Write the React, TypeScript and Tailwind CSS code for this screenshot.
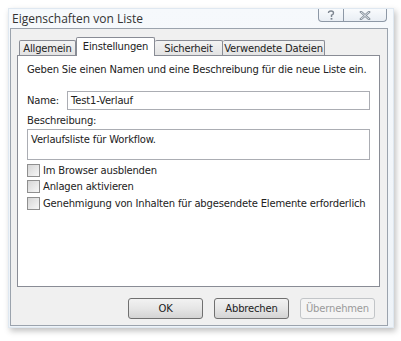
import React from "react";

const ui = { fontFamily: "Tahoma, 'DejaVu Sans', sans-serif", letterSpacing: "-0.18px" };

function Check({ label }: { label: string }) {
  return (
    <div className="flex items-center h-[16.5px]">
      <div className="w-[13px] h-[13px] border border-[#8f8f8f] bg-gradient-to-br from-[#d6d6d6] to-[#f7f7f7] shrink-0" />
      <span className="ml-[3px] text-[10px] text-[#222] whitespace-nowrap">{label}</span>
    </div>
  );
}

function Btn({ label, disabled }: { label: string; disabled?: boolean }) {
  return (
    <div
      className={
        "w-[75px] h-[21px] rounded-[3px] flex items-center justify-center text-[10px] " +
        (disabled
          ? "border border-[#c2c5c8] bg-[#f4f4f4] text-[#9a9a9a]"
          : "border border-[#707070] bg-gradient-to-b from-[#f2f2f2] via-[#e6e6e6] to-[#d4d4d4] text-[#222]")
      }
    >
      {label}
    </div>
  );
}

export default function App() {
  return (
    <div className="w-[401px] h-[341px] bg-white overflow-hidden" style={ui}>
      <div className="ml-[8px] pt-[8px]">
        <div className="w-[386px] h-[320px] bg-gradient-to-b from-[#f6f9fc] to-[#eef3f8] border border-[#dfe8f1] shadow-[2px_3px_6px_rgba(0,0,0,0.25)] flex flex-col">
          <div className="h-[19px] flex items-start justify-between">
            <span className="ml-[3px] mt-[3px] text-[12px] leading-[14px] text-[#333]" style={{ fontFamily: "'Open Sans', sans-serif", letterSpacing: "0px" }}>
              Eigenschaften von Liste
            </span>
            <div className="mr-[6px] flex h-[13px] border border-t-0 border-[#8d98a6] rounded-b-[4px] bg-gradient-to-b from-[#f9fbfd] to-[#e9eef4]">
              <div className="w-[25px] flex items-center justify-center border-r border-[#8d98a6]">
                <svg width="8" height="10" viewBox="0 0 8 10">
                  <path d="M1.5 3 Q1.5 1 4 1 Q6.5 1 6.5 3 Q6.5 4.5 4.5 5.2 L4.5 7" fill="none" stroke="#7b848f" strokeWidth="1.4" />
                  <rect x="3.6" y="8" width="1.8" height="1.6" fill="#7b848f" />
                </svg>
              </div>
              <div className="w-[42px] flex items-center justify-center">
                <svg width="12" height="9" viewBox="0 0 12 9">
                  <path d="M2 1 L10 8 M10 1 L2 8" stroke="#8a939e" strokeWidth="2.4" strokeLinecap="square" />
                  <path d="M2 1 L10 8 M10 1 L2 8" stroke="#eef2f6" strokeWidth="0.8" />
                </svg>
              </div>
            </div>
          </div>
          <div className="ml-[1px] mr-[5px] h-[298px] bg-[#f0f0f0] border border-[#9ba3ad] flex flex-col">
            <div className="ml-[6px] mt-[8px] w-[363px]">
              <div className="flex items-end h-[18px] pl-[2px] text-[10px] text-[#222] whitespace-nowrap">
                <div className="h-[15px] w-[57px] border border-b-0 border-[#898c95] bg-gradient-to-b from-[#f3f3f3] to-[#e3e3e3] flex items-center justify-center rounded-t-[2px]">Allgemein</div>
                <div className="h-[19px] w-[79px] -mb-[1px] border border-b-0 border-[#898c95] bg-white flex items-center justify-center relative z-10 rounded-t-[2px] pb-[2px]">Einstellungen</div>
                <div className="h-[15px] w-[68px] border border-b-0 border-l-0 border-[#898c95] bg-gradient-to-b from-[#f3f3f3] to-[#e3e3e3] flex items-center justify-center rounded-t-[2px]">Sicherheit</div>
                <div className="h-[15px] w-[102px] border border-b-0 border-l-0 border-[#898c95] bg-gradient-to-b from-[#f3f3f3] to-[#e3e3e3] flex items-center justify-center rounded-t-[2px]">Verwendete Dateien</div>
              </div>
              <div className="h-[232px] bg-white border border-[#898c95] px-[9px] text-[10px] text-[#222]">
                <div className="mt-[7px] h-[13px] leading-[13px] whitespace-nowrap">Geben Sie einen Namen und eine Beschreibung für die neue Liste ein.</div>
                <div className="mt-[15px] flex items-center">
                  <span className="w-[40px]">Name:</span>
                  <div className="flex-1 h-[19px] border border-[#abadb3] flex items-center px-[3px]">Test1-Verlauf</div>
                </div>
                <div className="mt-[4px] h-[13px] leading-[13px]">Beschreibung:</div>
                <div className="mt-[2px] h-[31px] border border-[#abadb3] px-[3px] pt-[2px]">Verlaufsliste für Workflow.</div>
                <div className="mt-[2px] flex flex-col">
                  <Check label="Im Browser ausblenden" />
                  <Check label="Anlagen aktivieren" />
                  <Check label="Genehmigung von Inhalten für abgesendete Elemente erforderlich" />
                </div>
              </div>
            </div>
            <div className="mt-[11px] ml-[117px] flex gap-[11px]">
              <Btn label="OK" />
              <Btn label="Abbrechen" />
              <Btn label="Übernehmen" disabled />
            </div>
          </div>
        </div>
      </div>
    </div>
  );
}
